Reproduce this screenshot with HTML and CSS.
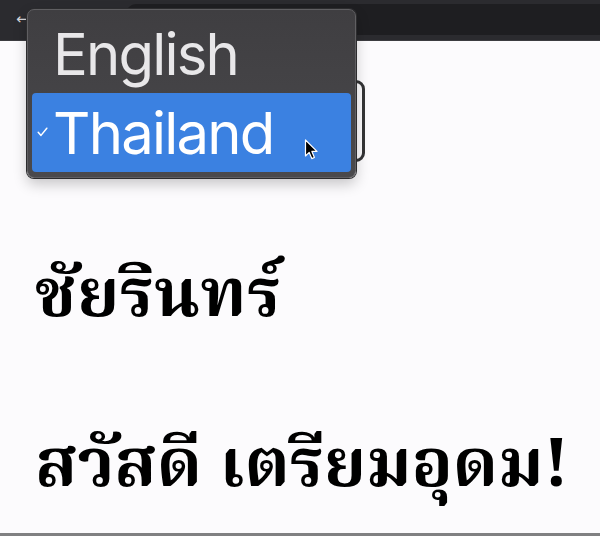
FILE: index.html
```html
<!DOCTYPE html>
<html lang="th">
<head>
<meta charset="utf-8">
<title>Language</title>
<link rel="stylesheet" href="styles.css">
</head>
<body>
<div class="toolbar">
  <div class="nav"><span class="back">←</span></div>
  <div class="tabstrip"></div>
</div>
<main class="page">
  <div class="select-row"><div class="select-box"></div></div>
  <h1 class="thai first">ชัยรินทร์</h1>
  <h1 class="thai second">สวัสดี เตรียมอุดม!</h1>
</main>
<div class="menu">
  <div class="option">English</div>
  <div class="option selected"><svg class="check" width="11" height="10" viewBox="0 0 11 10"><path d="M1.2 5.2 L4 8.4 L9.8 1.2" fill="none" stroke="#fff" stroke-width="1.5" stroke-linecap="round" stroke-linejoin="round"/></svg>Thailand
    <svg class="cursor" width="14" height="22" viewBox="0 0 14 22"><path d="M1.5 1 L1.5 17 L5.2 13.4 L7.8 19.6 L10.4 18.5 L7.9 12.4 L13 12.4 Z" fill="#000" stroke="#fff" stroke-width="1.2" stroke-linejoin="round"/></svg>
  </div>
</div>
</body>
</html>
```
FILE: styles.css
```css
html, body {
  margin: 0;
  padding: 0;
}
body {
  width: 600px;
  height: 536px;
  background: #fcfbfd;
  position: relative;
  overflow: hidden;
  font-family: "Inter", "Roboto", sans-serif;
}
.toolbar {
  height: 31px;
  padding: 4px 0 5px 0;
  background: #2b2b2f;
  display: flex;
  border-bottom: 1px solid #3c3c40;
}
.nav {
  width: 126px;
  display: flex;
  align-items: center;
  padding-left: 16px;
  box-sizing: border-box;
}
.back {
  color: #d6d6da;
  font-size: 15px;
  line-height: 1;
  font-family: "DejaVu Sans", sans-serif;
}
.tabstrip {
  flex: 1;
  background: #1e1e21;
  border-radius: 10px 0 0 0;
}
.page {
  padding: 39px 0 0 35px;
  height: 453px;
  border-bottom: 3px solid #808082;
}
.select-row {
  display: flex;
}
.select-box {
  width: 324px;
  height: 76px;
  border: 3px solid #333335;
  border-radius: 9px;
}
.thai {
  margin: 0;
  font-family: "Noto Serif Thai", "Noto Sans", sans-serif;
  font-weight: 700;
  font-size: 68px;
  letter-spacing: 0.6px;
  color: #000;
  line-height: 100px;
}
.first {
  margin-top: 86px;
}
.second {
  margin-top: 70px;
  letter-spacing: 0;
}
.menu {
  position: absolute;
  left: 27px;
  top: 9px;
  width: 329px;
  height: 169px;
  box-sizing: border-box;
  padding: 4px 4px;
  background: linear-gradient(#3f3e41, #4a494c);
  border: 1px solid #605f62;
  border-radius: 7px;
  box-shadow: 0 0 0 1px #2c2c2e, 0 6px 14px rgba(0,0,0,0.22);
  display: flex;
  flex-direction: column;
}
.option {
  height: 79px;
  display: flex;
  align-items: center;
  padding-left: 21px;
  font-size: 58px;
  letter-spacing: -1.8px;
  color: #e8e7e9;
  position: relative;
  border-radius: 4px;
}
.option.selected {
  background: #3b81e1;
  color: #ffffff;
}
.check {
  position: absolute;
  left: 5px;
  top: 34px;
}
.cursor {
  position: absolute;
  left: 272px;
  top: 46px;
}
```
